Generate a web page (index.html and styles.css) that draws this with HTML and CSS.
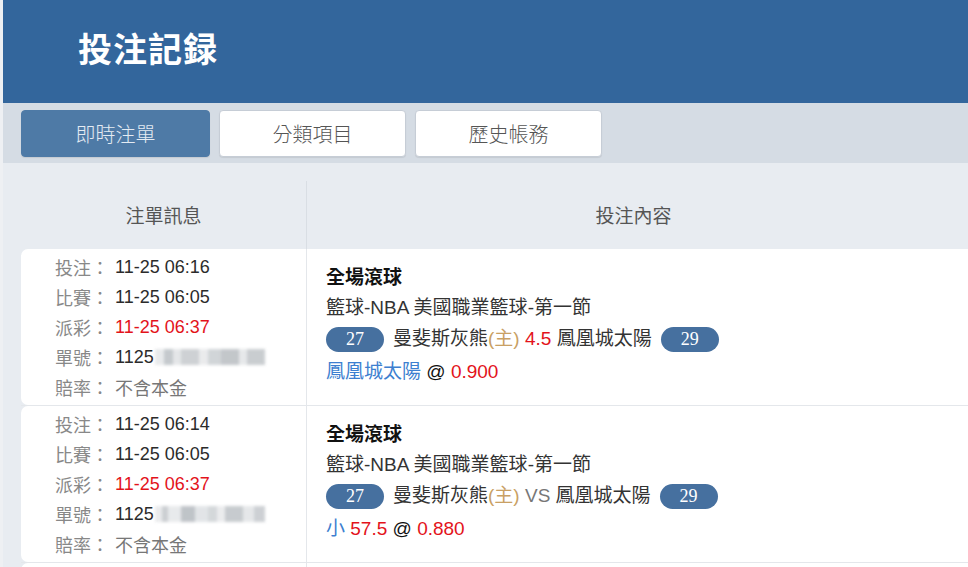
FILE: index.html
```html
<!DOCTYPE html>
<html lang="zh-Hant">
<head>
  <meta charset="UTF-8">
  <meta name="viewport" content="width=device-width, initial-scale=1.0">
  <title>投注記録</title>
  <link rel="stylesheet" href="styles.css">
</head>
<body>
  <div class="page">
    <div class="header">
      <h1>投注記録</h1>
    </div>

    <div class="tabs">
      <div class="tab active">即時注單</div>
      <div class="tab">分類項目</div>
      <div class="tab">歷史帳務</div>
    </div>

    <div class="records">
      <div class="records-head">
        <div class="head-cell">注單訊息</div>
        <div class="head-cell head-main">投注內容</div>
      </div>

      <div class="record">
        <div class="info">
          <div class="info-line"><span class="label">投注：</span><span class="value">11-25 06:16</span></div>
          <div class="info-line"><span class="label">比賽：</span><span class="value">11-25 06:05</span></div>
          <div class="info-line"><span class="label">派彩：</span><span class="value red">11-25 06:37</span></div>
          <div class="info-line"><span class="label">單號：</span><span class="value">1125<span class="blur"></span></span></div>
          <div class="info-line"><span class="label">賠率：</span><span class="value muted">不含本金</span></div>
        </div>
        <div class="content">
          <div class="line title">全場滾球</div>
          <div class="line">籃球-NBA 美國職業籃球-第一節</div>
          <div class="line teams">
            <span class="badge">27</span>
            <span>曼斐斯灰熊<span class="home">(主)</span> <span class="red">4.5</span> 鳳凰城太陽</span>
            <span class="badge">29</span>
          </div>
          <div class="line pick"><span class="blue">鳳凰城太陽</span> <span class="at">@</span> <span class="red">0.900</span></div>
        </div>
      </div>

      <div class="record">
        <div class="info">
          <div class="info-line"><span class="label">投注：</span><span class="value">11-25 06:14</span></div>
          <div class="info-line"><span class="label">比賽：</span><span class="value">11-25 06:05</span></div>
          <div class="info-line"><span class="label">派彩：</span><span class="value red">11-25 06:37</span></div>
          <div class="info-line"><span class="label">單號：</span><span class="value">1125<span class="blur blur-b"></span></span></div>
          <div class="info-line"><span class="label">賠率：</span><span class="value muted">不含本金</span></div>
        </div>
        <div class="content">
          <div class="line title">全場滾球</div>
          <div class="line">籃球-NBA 美國職業籃球-第一節</div>
          <div class="line teams">
            <span class="badge">27</span>
            <span>曼斐斯灰熊<span class="home">(主)</span> <span class="vs">VS</span> 鳳凰城太陽</span>
            <span class="badge">29</span>
          </div>
          <div class="line pick"><span class="blue">小</span> <span class="red">57.5</span> <span class="at">@</span> <span class="red">0.880</span></div>
        </div>
      </div>

      <div class="record">
        <div class="info"></div>
        <div class="content"></div>
      </div>
    </div>
  </div>
</body>
</html>
```

FILE: styles.css
```css
body {
  margin: 0;
  background-color: #eef0f3;
  font-family: "Liberation Sans", "Noto Sans CJK TC", sans-serif;
  color: #333;
  overflow: hidden;
}

.page {
  margin-left: 3px;
  background-color: #e8ecf1;
  min-height: 567px;
}

.header {
  height: 103px;
  background-color: #33669c;
  display: flex;
  align-items: center;
  padding-left: 75px;
}

.header h1 {
  margin: 0 0 8px 0;
  font-family: "Noto Sans CJK TC", serif;
  font-size: 34px;
  font-weight: bold;
  color: #fff;
  letter-spacing: 1px;
}

.tabs {
  height: 60px;
  box-sizing: border-box;
  background-color: #d5dce4;
  padding: 7px 18px 6px;
  display: flex;
  gap: 9px;
}

.tab {
  width: 187px;
  height: 47px;
  box-sizing: border-box;
  background-color: #fff;
  border: 1px solid #c6cdd6;
  border-radius: 4px;
  box-shadow: 0 1px 1px rgba(0, 0, 0, 0.08);
  display: flex;
  align-items: center;
  justify-content: center;
  font-family: "Noto Sans CJK TC", sans-serif;
  font-size: 20px;
  font-weight: 300;
  color: #555;
}

.tab.active {
  width: 189px;
  background-color: #4e7aa6;
  border-color: #4e7aa6;
  color: #e4ebf3;
}

.records {
  padding-top: 18px;
}

.records-head {
  display: grid;
  grid-template-columns: 285px 1fr;
  margin-left: 18px;
  height: 68px;
}

.head-cell {
  display: flex;
  align-items: center;
  justify-content: center;
  font-size: 19px;
  color: #555;
  padding-bottom: 1px;
}

.head-main {
  border-left: 1px solid #d9dee4;
  padding-right: 8px;
}

.record {
  display: grid;
  grid-template-columns: 285px 1fr;
  margin-left: 18px;
  height: 157px;
  box-sizing: border-box;
  border-bottom: 1px solid #e4e7eb;
}

.info {
  background-color: #fff;
  border-radius: 7px 0 0 7px;
  padding: 3px 0 0 34px;
  font-size: 18px;
}

.info-line {
  height: 30px;
  display: flex;
  align-items: center;
  white-space: nowrap;
}

.label {
  color: #888;
  width: 60px;
}

.value {
  color: #2b2b2b;
  display: flex;
  align-items: center;
}

.value.red {
  color: #e3131b;
}

.value.muted {
  color: #777;
}

.blur {
  display: inline-block;
  width: 110px;
  height: 16px;
  margin-left: 1px;
  background: linear-gradient(90deg, #e6e8ea 0 8%, #bfc4c8 8% 16%, #e2e4e6 16% 24%, #c9cdd0 24% 40%, #e8e9eb 40% 48%, #cdd1d4 48% 60%, #bdc1c5 60% 76%, #e4e6e8 76% 84%, #c4c8cc 84% 100%);
  filter: blur(1.5px);
  opacity: 0.9;
}

.blur-b {
  background: linear-gradient(90deg, #e8e9eb 0 6%, #c6cace 6% 12%, #e6e8ea 12% 24%, #b9bec3 24% 36%, #dfe2e5 36% 48%, #d0d4d7 48% 56%, #e9eaec 56% 64%, #c2c6ca 64% 80%, #e3e5e7 80% 90%, #c8ccd0 90% 100%);
}

.content {
  background-color: #fff;
  border-left: 1px solid #e4e7eb;
  padding: 14px 0 0 19px;
  font-size: 19px;
}

.line {
  height: 30px;
  line-height: 30px;
  white-space: nowrap;
}

.line.title {
  font-weight: bold;
  color: #111;
}

.line.teams {
  height: 32px;
  display: flex;
  align-items: center;
  gap: 9px;
}

.line.pick {
  height: 34px;
  line-height: 34px;
}

.badge {
  width: 58px;
  height: 25px;
  border-radius: 13px;
  background-color: #46709f;
  color: #fff;
  font-family: "Liberation Serif", serif;
  font-size: 18px;
  display: flex;
  align-items: center;
  justify-content: center;
}

.at {
  color: #111;
}

.red {
  color: #e3131b;
}

.blue {
  color: #3d7fd0;
}

.home {
  color: #c9a064;
}

.vs {
  color: #777;
}
```
